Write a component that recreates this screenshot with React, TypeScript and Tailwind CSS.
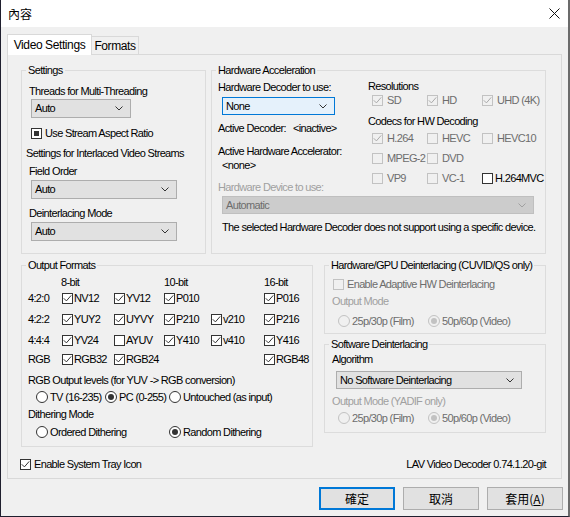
import React from "react";

type CS = "on" | "off" | "mixed";

function Check({ state, disabled }: { state: CS; disabled?: boolean }) {
  const border = disabled ? "border-[#c2c2c2]" : "border-[#333333]";
  const bg = disabled ? "bg-[#f0f0f0]" : "bg-white";
  return (
    <span className={`w-[11px] h-[11px] border ${border} ${bg} flex items-center justify-center shrink-0`}>
      {state === "on" && (
        <svg width="9" height="9" viewBox="0 0 9 9">
          <path d="M0.8 4.3 L3.4 6.9 L8.2 1.4" fill="none" stroke={disabled ? "#a9a9a9" : "#333333"} strokeWidth="1" />
        </svg>
      )}
      {state === "mixed" && <span className="w-[5px] h-[5px] bg-[#333333]" />}
    </span>
  );
}

function CheckItem({
  state,
  disabled,
  label,
  gap = "gap-[2px]",
  className = "",
}: {
  state: CS;
  disabled?: boolean;
  label: string;
  gap?: string;
  className?: string;
}) {
  return (
    <div className={`flex items-center h-[14px] ${gap} ${className}`}>
      <Check state={state} disabled={disabled} />
      <span className={`whitespace-nowrap ${disabled ? "text-[#6d6d6d]" : "text-black"}`}>{label}</span>
    </div>
  );
}

function Radio({ on, disabled }: { on?: boolean; disabled?: boolean }) {
  return (
    <span
      className={`w-[12px] h-[12px] rounded-full border ${
        disabled ? "border-[#c2c2c2] bg-[#f0f0f0]" : "border-[#333333] bg-white"
      } flex items-center justify-center shrink-0`}
    >
      {on && <span className={`w-[6px] h-[6px] rounded-full ${disabled ? "bg-[#c2c2c2]" : "bg-[#333333]"}`} />}
    </span>
  );
}

function RadioItem({
  on,
  disabled,
  label,
  className = "",
}: {
  on?: boolean;
  disabled?: boolean;
  label: string;
  className?: string;
}) {
  return (
    <div className={`flex items-center gap-[2px] h-[14px] ${className}`}>
      <Radio on={on} disabled={disabled} />
      <span className={`whitespace-nowrap ${disabled ? "text-[#6d6d6d]" : "text-black"}`}>{label}</span>
    </div>
  );
}

function Chevron({ color = "#333333" }: { color?: string }) {
  return (
    <svg width="8" height="5" viewBox="0 0 8 5" className="shrink-0">
      <path d="M0.5 0.5 L4 4 L7.5 0.5" fill="none" stroke={color} strokeWidth="1" />
    </svg>
  );
}

function Select({
  value,
  className,
  variant = "normal",
}: {
  value: string;
  className: string;
  variant?: "normal" | "focus" | "disabled";
}) {
  const look =
    variant === "focus"
      ? "bg-[#e5f1fb] border-[#0078d7] text-black"
      : variant === "disabled"
      ? "bg-[#cccccc] border-[#bfbfbf] text-[#6d6d6d]"
      : "bg-[#e1e1e1] border-[#adadad] text-black";
  return (
    <div className={`flex items-center justify-between border pl-[3px] pr-[7px] ${look} ${className}`}>
      <span className="whitespace-nowrap">{value}</span>
      <Chevron color={variant === "disabled" ? "#a0a0a0" : "#333333"} />
    </div>
  );
}

function Group({
  title,
  className,
  children,
}: {
  title: string;
  className: string;
  children: React.ReactNode;
}) {
  return (
    <fieldset className={`border border-[#dcdcdc] m-0 p-0 min-w-0 shrink-0 ${className}`}>
      <legend className="ml-[4px] px-[2px] h-[15px] leading-[15px] whitespace-nowrap">{title}</legend>
      {children}
    </fieldset>
  );
}

const T = "h-[14px] leading-[14px] whitespace-nowrap";

function SettingsGroup() {
  return (
    <Group title="Settings" className="w-[185px] h-[191px]">
      <div className="pl-[7px]">
        <div className={`${T} mt-[6px]`}>Threads for Multi-Threading</div>
        <Select value="Auto" className="ml-[2px] mt-[1px] w-[100px] h-[19px]" />
        <CheckItem state="mixed" label="Use Stream Aspect Ratio" className="ml-[2px] mt-[8px]" gap="gap-[3px]" />
        <div className={`${T} mt-[6px] -ml-[3px]`}>Settings for Interlaced Video Streams</div>
        <div className={`${T} mt-[4px]`}>Field Order</div>
        <Select value="Auto" className="ml-[2px] mt-[2px] w-[146px] h-[19px]" />
        <div className={`${T} mt-[7px]`}>Deinterlacing Mode</div>
        <Select value="Auto" className="ml-[2px] mt-[2px] w-[146px] h-[19px]" />
      </div>
    </Group>
  );
}

function HwGroup() {
  const col = "w-[55px]";
  return (
    <Group title="Hardware Acceleration" className="w-[335px] h-[191px]">
      <div className="pl-[6px]">
        <div className="flex">
          <div className="w-[150px]">
            <div className={`${T} mt-[2px]`}>Hardware Decoder to use:</div>
            <Select value="None" variant="focus" className="ml-[4px] mt-[3px] w-[113px] h-[18px]" />
            <div className={`${T} mt-[6px] flex`}>
              <span className="inline-block w-[75px]">Active Decoder:</span>
              <span>&lt;inactive&gt;</span>
            </div>
            <div className={`${T} mt-[9px]`}>Active Hardware Accelerator:</div>
            <div className={`${T} ml-[4px]`}>&lt;none&gt;</div>
            <div className={`${T} mt-[8px] text-[#a0a0a0]`}>Hardware Device to use:</div>
          </div>
          <div className="flex-1">
            <div className={`${T} mt-[1px]`}>Resolutions</div>
            <div className="flex ml-[4px]">
              <CheckItem state="on" disabled label="SD" className={col} gap="gap-[4px]" />
              <CheckItem state="on" disabled label="HD" className={col} gap="gap-[4px]" />
              <CheckItem state="on" disabled label="UHD (4K)" gap="gap-[4px]" />
            </div>
            <div className={`${T} mt-[7px]`}>Codecs for HW Decoding</div>
            <div className="flex ml-[4px] mt-[3px]">
              <CheckItem state="on" disabled label="H.264" className={col} gap="gap-[4px]" />
              <CheckItem state="off" disabled label="HEVC" className={col} gap="gap-[4px]" />
              <CheckItem state="off" disabled label="HEVC10" gap="gap-[4px]" />
            </div>
            <div className="flex ml-[4px] mt-[6px]">
              <CheckItem state="off" disabled label="MPEG-2" className={col} gap="gap-[4px]" />
              <CheckItem state="off" disabled label="DVD" className={col} gap="gap-[4px]" />
            </div>
            <div className="flex ml-[4px] mt-[6px]">
              <CheckItem state="off" disabled label="VP9" className={col} gap="gap-[4px]" />
              <CheckItem state="off" disabled label="VC-1" className={col} gap="gap-[4px]" />
              <CheckItem state="off" label="H.264MVC" gap="gap-[2px]" />
            </div>
          </div>
        </div>
        <Select value="Automatic" variant="disabled" className="ml-[4px] mt-[2px] w-[312px] h-[18px]" />
        <div className={`${T} mt-[6px] ml-[4px]`}>
          The selected Hardware Decoder does not support using a specific device.
        </div>
      </div>
    </Group>
  );
}

type Cell = { s: CS; l: string } | null;

function FormatRow({ label, cells, className }: { label: string; cells: Cell[]; className: string }) {
  return (
    <div className={`grid grid-cols-[34px_52px_50px_47px_53px_60px] h-[14px] items-center ${className}`}>
      <span className="whitespace-nowrap">{label}</span>
      {cells.map((c, i) =>
        c ? <CheckItem key={i} state={c.s} label={c.l} gap="gap-[1px]" /> : <span key={i} />
      )}
    </div>
  );
}

function OutputGroup() {
  return (
    <Group title="Output Formats" className="w-[292px] h-[189px]">
      <div className="pl-[6px]">
        <div className={`grid grid-cols-[34px_52px_50px_47px_53px_60px] ${T} mt-[2px]`}>
          <span />
          <span className="-ml-[1px]">8-bit</span>
          <span />
          <span>10-bit</span>
          <span />
          <span>16-bit</span>
        </div>
        <FormatRow
          label="4:2:0"
          className="mt-[1px]"
          cells={[{ s: "on", l: "NV12" }, { s: "on", l: "YV12" }, { s: "on", l: "P010" }, null, { s: "on", l: "P016" }]}
        />
        <FormatRow
          label="4:2:2"
          className="mt-[7px]"
          cells={[
            { s: "on", l: "YUY2" },
            { s: "on", l: "UYVY" },
            { s: "on", l: "P210" },
            { s: "on", l: "v210" },
            { s: "on", l: "P216" },
          ]}
        />
        <FormatRow
          label="4:4:4"
          className="mt-[7px]"
          cells={[
            { s: "on", l: "YV24" },
            { s: "off", l: "AYUV" },
            { s: "on", l: "Y410" },
            { s: "on", l: "v410" },
            { s: "on", l: "Y416" },
          ]}
        />
        <FormatRow
          label="RGB"
          className="mt-[5px]"
          cells={[{ s: "on", l: "RGB32" }, { s: "on", l: "RGB24" }, null, null, { s: "on", l: "RGB48" }]}
        />
        <div className={`${T} mt-[8px]`}>RGB Output levels (for YUV -&gt; RGB conversion)</div>
        <div className="flex mt-[3px] ml-[8px]">
          <RadioItem label="TV (16-235)" className="w-[69px]" />
          <RadioItem on label="PC (0-255)" className="w-[64px]" />
          <RadioItem label="Untouched (as input)" />
        </div>
        <div className={`${T} mt-[3px]`}>Dithering Mode</div>
        <div className="flex mt-[4px] ml-[8px]">
          <RadioItem label="Ordered Dithering" className="w-[133px]" />
          <RadioItem on label="Random Dithering" />
        </div>
      </div>
    </Group>
  );
}

function HwDeintGroup() {
  return (
    <Group title="Hardware/GPU Deinterlacing (CUVID/QS only)" className="w-[222px] h-[76px]">
      <div className="pl-[7px]">
        <CheckItem state="off" disabled label="Enable Adaptive HW Deinterlacing" className="ml-[1px] mt-[4px]" gap="gap-[3px]" />
        <div className={`${T} mt-[3px] text-[#a0a0a0]`}>Output Mode</div>
        <div className="flex mt-[6px] ml-[6px]">
          <RadioItem disabled label="25p/30p (Film)" className="w-[90px]" />
          <RadioItem disabled on label="50p/60p (Video)" />
        </div>
      </div>
    </Group>
  );
}

function SwDeintGroup() {
  return (
    <Group title="Software Deinterlacing" className="w-[222px] h-[96px] mt-[3px]">
      <div className="pl-[7px]">
        <div className={`${T}`}>Algorithm</div>
        <Select value="No Software Deinterlacing" className="ml-[4px] mt-[5px] w-[186px] h-[18px]" />
        <div className={`${T} mt-[5px] text-[#a0a0a0]`}>Output Mode (YADIF only)</div>
        <div className="flex mt-[3px] ml-[6px]">
          <RadioItem disabled label="25p/30p (Film)" className="w-[90px]" />
          <RadioItem disabled on label="50p/60p (Video)" />
        </div>
      </div>
    </Group>
  );
}

export default function App() {
  return (
    <div
      className={`w-[570px] h-[517px] bg-[#f0f0f0] border-l border-b border-l-[#1f1f2e] border-b-[#1f1f2e] border-r-2 border-r-[#6b6b6b] flex flex-col text-[11px] tracking-[-0.65px] text-black overflow-hidden font-['Liberation_Sans','Noto_Sans_CJK_TC',sans-serif]`}
    >
      <div className="h-[27px] bg-white flex items-center justify-between pl-[7px] pr-[8px] shrink-0">
        <span className="text-[12px] tracking-normal font-['Noto_Sans_CJK_TC',sans-serif]">內容</span>
        <svg width="11" height="11" viewBox="0 0 11 11">
          <path d="M0.5 0.5 L10.5 10.5 M10.5 0.5 L0.5 10.5" stroke="#111" strokeWidth="1" />
        </svg>
      </div>
      <div className="pl-[6px] pt-[7px]">
        <div className="flex items-end h-[20px]">
          <div className="relative z-10 w-[85px] h-[21px] -mb-[1px] bg-white border border-b-0 border-[#d9d9d9] flex items-center justify-center text-[12px] tracking-[-0.4px] pb-[1px] leading-none">
            Video Settings
          </div>
          <div className="w-[47px] h-[18px] border border-l-0 border-b-0 border-[#d9d9d9] bg-[#f0f0f0] flex items-center justify-center text-[12px] tracking-[-0.4px] leading-none">
            Formats
          </div>
        </div>
        <div className="w-[555px] h-[425px] border border-[#d9d9d9] bg-[#f0f0f0] pt-[8px] pl-[13px] pr-[15px]">
          <div className="flex gap-[5px]">
            <SettingsGroup />
            <HwGroup />
          </div>
          <div className="flex gap-[11px] mt-[4px]">
            <OutputGroup />
            <div className="flex flex-col">
              <HwDeintGroup />
              <SwDeintGroup />
            </div>
          </div>
          <div className="flex items-center justify-between h-[14px] mt-[10px]">
            <CheckItem state="on" label="Enable System Tray Icon" className="-ml-[1px]" gap="gap-[3px]" />
            <span className="whitespace-nowrap">LAV Video Decoder 0.74.1.20-git</span>
          </div>
        </div>
      </div>
      <div className="flex justify-end gap-[8px] pr-[5px] mt-[8px] tracking-normal font-['Noto_Sans_CJK_TC',sans-serif]">
        <button className="w-[76px] h-[23px] bg-[#e1e1e1] border border-[#0078d7] shadow-[inset_0_0_0_1px_#0078d7] text-[12px] leading-none">
          確定
        </button>
        <button className="w-[76px] h-[23px] bg-[#e1e1e1] border border-[#adadad] text-[12px] leading-none">
          取消
        </button>
        <button className="w-[76px] h-[23px] bg-[#e1e1e1] border border-[#adadad] text-[12px] leading-none">
          套用(<span className="underline">A</span>)
        </button>
      </div>
    </div>
  );
}
